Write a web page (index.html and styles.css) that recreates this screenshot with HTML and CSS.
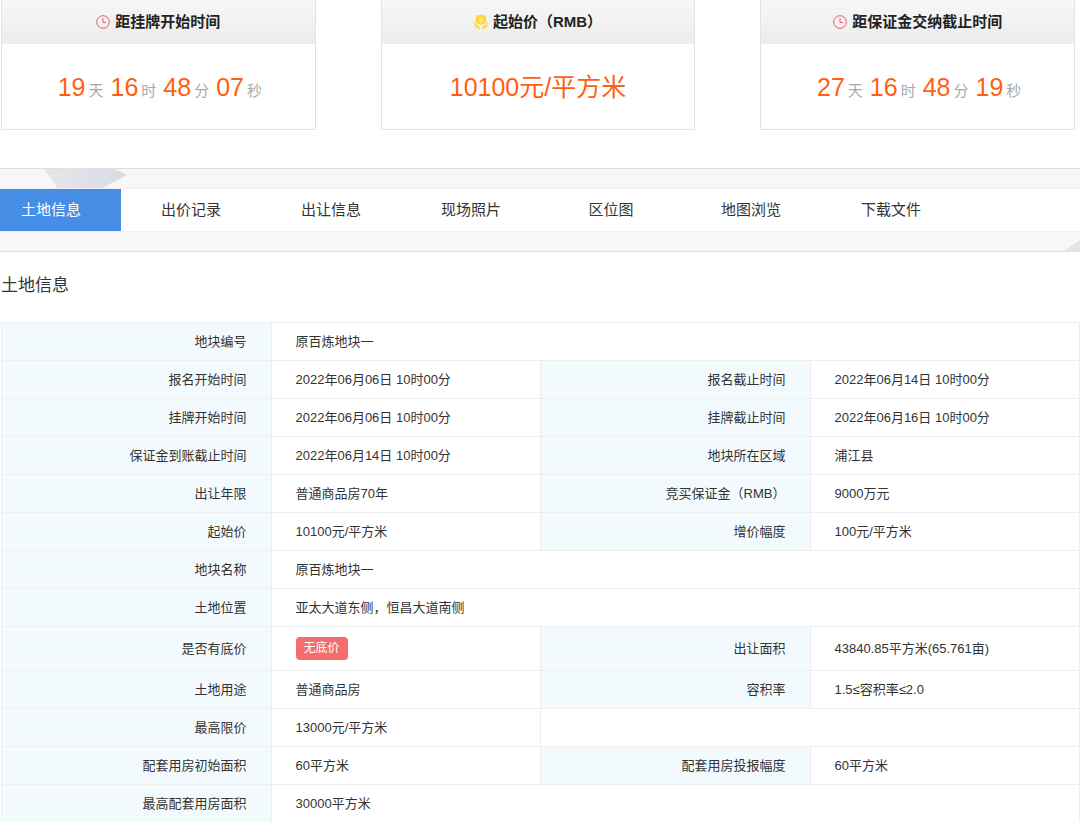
FILE: index.html
```html
<!DOCTYPE html>
<html lang="zh-CN">
<head>
    <meta charset="utf-8">
    <meta name="viewport" content="width=device-width, initial-scale=1">
    <title>土地信息</title>
    <link rel="stylesheet" href="styles.css">
</head>
<body>
    <svg class="sprite" aria-hidden="true">
        <symbol id="icon-clock" viewBox="0 0 14 14">
            <circle cx="7" cy="7" r="6.3" />
            <path d="M7 3V7.5H10" />
        </symbol>
        <symbol id="icon-price" viewBox="0 0 14 16">
            <path d="M2.6 1.2 4.6 1.6 7 .6 9.4 1.6 11.4 1.2 12 4V6.5C12 9 9.6 10.6 7 10.6S2 9 2 6.5V4Z" fill="currentColor" stroke="none" />
            <path d="M4.8 3.2 7 5.2 9.2 3.2M4.2 5.4H9.8M4.8 7.4H9.2M7 5.2V9" stroke="#fff3c0" stroke-width=".7" />
            <path d="M.7 8C.7 10 1.6 11 3.2 11.8 4.8 12.5 5.4 13.2 5.4 15.2M13.3 8C13.3 10 12.4 11 10.8 11.8 9.2 12.5 8.6 13.2 8.6 15.2" stroke-width="1.3" />
            <path d="M.9 10.8 3.6 14.4M13.1 10.8 10.4 14.4" stroke-width="1.2" />
        </symbol>
    </svg>

    <section class="cards">
        <div class="card">
            <h3 class="card-head">
                <svg class="icon clock"><use href="#icon-clock" /></svg>
                距挂牌开始时间
            </h3>
            <p class="card-body countdown">
                <span><b>19</b>天</span>
                <span><b>16</b>时</span>
                <span><b>48</b>分</span>
                <span><b>07</b>秒</span>
            </p>
        </div>
        <div class="card">
            <h3 class="card-head">
                <svg class="icon coin"><use href="#icon-price" /></svg>
                起始价（RMB）
            </h3>
            <p class="card-body price">10100元/平方米</p>
        </div>
        <div class="card">
            <h3 class="card-head">
                <svg class="icon clock"><use href="#icon-clock" /></svg>
                距保证金交纳截止时间
            </h3>
            <p class="card-body countdown">
                <span><b>27</b>天</span>
                <span><b>16</b>时</span>
                <span><b>48</b>分</span>
                <span><b>19</b>秒</span>
            </p>
        </div>
    </section>

    <div class="tab-band">
        <svg class="facet facet-left" viewBox="0 0 83 20" aria-hidden="true">
            <defs>
                <linearGradient id="facet-fill">
                    <stop offset="0" stop-color="#e6e7ec" />
                    <stop offset="1" stop-color="#d9dbe3" />
                </linearGradient>
            </defs>
            <path d="M0 0H71L83 6 56 20H14Z" fill="url(#facet-fill)" />
        </svg>
        <svg class="facet facet-right" viewBox="0 0 16 11" aria-hidden="true">
            <path d="M0 11 16 0V11Z" fill="#e3e4ea" />
        </svg>
        <nav class="tabs">
            <a class="tab active" href="#land">土地信息</a>
            <a class="tab" href="#bids">出价记录</a>
            <a class="tab" href="#transfer">出让信息</a>
            <a class="tab" href="#photos">现场照片</a>
            <a class="tab" href="#location">区位图</a>
            <a class="tab" href="#map">地图浏览</a>
            <a class="tab" href="#files">下载文件</a>
        </nav>
    </div>

    <section id="land">
        <h2 class="title">土地信息</h2>
        <table class="info">
            <tr>
                <th>地块编号</th>
                <td colspan="3">原百炼地块一</td>
            </tr>
            <tr>
                <th>报名开始时间</th>
                <td>2022年06月06日 10时00分</td>
                <th>报名截止时间</th>
                <td>2022年06月14日 10时00分</td>
            </tr>
            <tr>
                <th>挂牌开始时间</th>
                <td>2022年06月06日 10时00分</td>
                <th>挂牌截止时间</th>
                <td>2022年06月16日 10时00分</td>
            </tr>
            <tr>
                <th>保证金到账截止时间</th>
                <td>2022年06月14日 10时00分</td>
                <th>地块所在区域</th>
                <td>浦江县</td>
            </tr>
            <tr>
                <th>出让年限</th>
                <td>普通商品房70年</td>
                <th>竞买保证金（RMB）</th>
                <td>9000万元</td>
            </tr>
            <tr>
                <th>起始价</th>
                <td>10100元/平方米</td>
                <th>增价幅度</th>
                <td>100元/平方米</td>
            </tr>
            <tr>
                <th>地块名称</th>
                <td colspan="3">原百炼地块一</td>
            </tr>
            <tr>
                <th>土地位置</th>
                <td colspan="3">亚太大道东侧，恒昌大道南侧</td>
            </tr>
            <tr class="tall">
                <th>是否有底价</th>
                <td><span class="badge">无底价</span></td>
                <th>出让面积</th>
                <td>43840.85平方米(65.761亩)</td>
            </tr>
            <tr>
                <th>土地用途</th>
                <td>普通商品房</td>
                <th>容积率</th>
                <td>1.5≤容积率≤2.0</td>
            </tr>
            <tr>
                <th>最高限价</th>
                <td>13000元/平方米</td>
                <td colspan="2"></td>
            </tr>
            <tr>
                <th>配套用房初始面积</th>
                <td>60平方米</td>
                <th>配套用房投报幅度</th>
                <td>60平方米</td>
            </tr>
            <tr>
                <th>最高配套用房面积</th>
                <td colspan="3">30000平方米</td>
            </tr>
        </table>
    </section>
</body>
</html>
```
FILE: styles.css
```css
* {
    box-sizing: border-box;
}
body {
    margin: 0;
    background: #fff;
    color: #333;
    font-family: "Liberation Sans", Arial, "Noto Sans CJK SC", sans-serif;
    font-size: 13px;
}
h2, h3, p {
    margin: 0;
}
.sprite {
    display: none;
}

/* countdown and price cards */
.cards {
    display: grid;
    grid-template-columns: repeat(3, 1fr);
    gap: 65px;
    padding: 0 5px 0 1px;
}
.card {
    border: 1px solid #e3e3e3;
    border-top: 0;
}
.card-head {
    display: flex;
    align-items: center;
    justify-content: center;
    gap: 5px;
    height: 44px;
    background: linear-gradient(#f7f7f7, #ececec);
    color: #222;
    font-size: 15px;
    line-height: 44px;
}
.icon {
    width: 14px;
    height: 14px;
    fill: none;
    stroke: currentColor;
}
.clock {
    color: #e85a6c;
}
.coin {
    height: 16px;
    color: #ffd534;
}
.card-body {
    display: flex;
    align-items: baseline;
    justify-content: center;
    height: 85px;
    line-height: 86px;
}
.countdown {
    gap: 7px;
    padding-left: 3px;
    color: #aaa;
    font-size: 15px;
}
.countdown b {
    margin-right: 3px;
    color: #ff6010;
    font-size: 25px;
    font-weight: normal;
}
.price {
    color: #ff6010;
    font-size: 25px;
}

/* tab bar */
.tab-band {
    position: relative;
    margin-top: 38px;
    padding: 19px 0;
    overflow: hidden;
    border: 1px solid #dfdfdf;
    border-width: 1px 0;
    background: #f7f7f7;
}
.facet {
    position: absolute;
}
.facet-left {
    top: 0;
    left: 44px;
    width: 83px;
}
.facet-right {
    right: 0;
    bottom: 0;
    width: 16px;
}
/* the first tab is cut by the left edge of the window */
.tabs {
    position: relative;
    display: flex;
    margin-left: -19px;
    border: 1px solid #f0f0f0;
    border-width: 1px 0;
    background: #fff;
}
.tab {
    flex: 0 0 140px;
    color: #333;
    font-size: 15px;
    line-height: 42px;
    text-align: center;
    text-decoration: none;
}
.tab.active {
    background: #468ee5;
    color: #fff;
}

/* land details */
.title {
    padding: 17px 1px 0;
    font-size: 17px;
    font-weight: normal;
    line-height: 34px;
}
.info {
    width: calc(100% - 1px);
    margin: 19px 0 0 1px;
    table-layout: fixed;
    border-collapse: collapse;
}
.info th,
.info td {
    height: 38px;
    padding: 0 24px;
    border: 1px solid #eee;
    font-weight: normal;
    line-height: 20px;
    text-align: left;
}
.info th {
    background: #f3fafe;
    text-align: right;
}
.info .tall td,
.info .tall th {
    height: 44px;
}
.badge {
    display: inline-block;
    padding: 0 8px;
    border-radius: 4px;
    background: #f56c6c;
    color: #fff;
    font-size: 12px;
    line-height: 23px;
    vertical-align: middle;
}
```
